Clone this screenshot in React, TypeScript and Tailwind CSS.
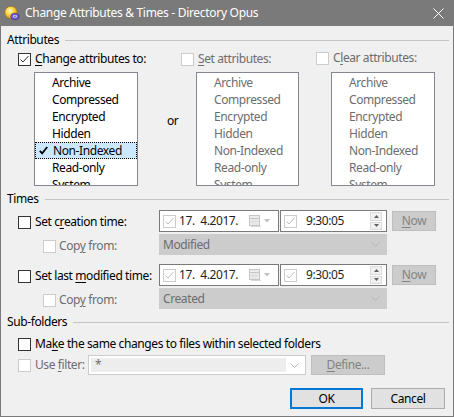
import React from 'react';

const FONT = { fontFamily: '"Noto Sans", "Open Sans", sans-serif' };

const ITEMS = ['Archive', 'Compressed', 'Encrypted', 'Hidden', 'Non-Indexed', 'Read-only', 'System'];

function CheckBox({ checked = false, disabled = false }: { checked?: boolean; disabled?: boolean }) {
  return (
    <div
      className={`w-[13px] h-[13px] shrink-0 bg-white border ${disabled ? 'border-[#cccccc]' : 'border-[#333333]'}`}
    >
      {checked && (
        <svg width="11" height="11" viewBox="0 0 11 11">
          <polyline
            points="1.5,5.5 4,8 9.5,2"
            fill="none"
            stroke={disabled ? '#bdbdbd' : '#333333'}
            strokeWidth="1"
          />
        </svg>
      )}
    </div>
  );
}

// label with one underlined access-key letter
function Label({ pre, key_, post, disabled = false }: { pre: string; key_: string; post: string; disabled?: boolean }) {
  return (
    <span className={`whitespace-nowrap ${disabled ? 'text-[#6d6d6d]' : 'text-black'}`}>
      {pre}
      <span className="underline underline-offset-2">{key_}</span>
      {post}
    </span>
  );
}

function GroupHeader({ title }: { title: string }) {
  return (
    <div className="flex items-center h-[16px] pl-[6px] pr-[4px]">
      <span className="text-black">{title}</span>
      <div className="flex-1 h-px bg-[#c4c4c4] ml-[6px]" />
    </div>
  );
}

function AttrList({ disabled = false, width }: { disabled?: boolean; width: string }) {
  return (
    <div className={`${width} h-[114px] bg-white border border-[#828790] overflow-hidden pt-px`}>
      {ITEMS.map((it, i) => {
        const sel = !disabled && i === 4;
        return (
          <div
            key={it}
            className={`relative h-[17px] flex items-center pl-[17px] ${
              sel ? 'bg-[#cce8ff] border border-dotted border-black pl-[16px]' : ''
            } ${disabled ? 'text-[#6d6d6d]' : 'text-black'}`}
          >
            {sel && (
              <svg className="absolute left-[3px] top-[3px]" width="9" height="9" viewBox="0 0 9 9">
                <polyline points="0.8,4.8 3.2,7.4 8.2,1" fill="none" stroke="#000" strokeWidth="1.8" />
              </svg>
            )}
            {it}
          </div>
        );
      })}
    </div>
  );
}

function Chevron({ color }: { color: string }) {
  return (
    <svg width="9" height="6" viewBox="0 0 9 6">
      <polyline points="0.5,0.5 4.5,4.5 8.5,0.5" fill="none" stroke={color} strokeWidth="1" />
    </svg>
  );
}

function DateBox() {
  return (
    <div className="w-[120px] h-[22px] bg-white border border-[#7a7a7a] flex items-center pl-[3px]">
      <CheckBox checked disabled />
      <span className="ml-[3px] text-[#1e1e1e] whitespace-pre">17.  4.2017.</span>
      <div className="flex-1" />
      {/* calendar glyph */}
      <svg width="13" height="12" viewBox="0 0 13 12" className="mr-[2px]">
        <rect x="0.5" y="0.5" width="10" height="10" fill="#ececec" stroke="#c6c6c6" />
        <line x1="1" y1="3.5" x2="10" y2="3.5" stroke="#c6c6c6" />
        <line x1="4" y1="4" x2="4" y2="10" stroke="#dddddd" />
        <line x1="7" y1="4" x2="7" y2="10" stroke="#dddddd" />
        <line x1="1" y1="6.5" x2="10" y2="6.5" stroke="#dddddd" />
        <rect x="2" y="11" width="10" height="1" fill="#d6d6d6" />
      </svg>
      <svg width="6" height="4" viewBox="0 0 6 4" className="mr-[8px]">
        <polygon points="0,0 6,0 3,3.5" fill="#c0c0c0" />
      </svg>
    </div>
  );
}

function TimeBox() {
  return (
    <div className="w-[107px] h-[22px] bg-white border border-[#7a7a7a] flex items-center pl-[3px] ml-[1px]">
      <CheckBox checked disabled />
      <span className="ml-[9px] text-[#1e1e1e]">9:30:05</span>
      <div className="flex-1" />
      <div className="w-[12px] h-[18px] mr-[4px] flex flex-col gap-px">
        <div className="flex-1 bg-[#f0f0f0] border border-[#dadada] flex items-center justify-center">
          <svg width="5" height="3" viewBox="0 0 5 3">
            <polygon points="0,3 5,3 2.5,0" fill="#606060" />
          </svg>
        </div>
        <div className="flex-1 bg-[#f0f0f0] border border-[#dadada] flex items-center justify-center">
          <svg width="5" height="3" viewBox="0 0 5 3">
            <polygon points="0,0 5,0 2.5,3" fill="#606060" />
          </svg>
        </div>
      </div>
    </div>
  );
}

function DisabledButton({ pre, key_, post, width }: { pre: string; key_: string; post: string; width: string }) {
  return (
    <div
      className={`${width} h-[20px] bg-[#cccccc] border border-[#bfbfbf] flex items-center justify-center text-[#838383]`}
    >
      <span>
        {pre}
        <span className="underline underline-offset-2">{key_}</span>
        {post}
      </span>
    </div>
  );
}

function DisabledCombo({ text }: { text: string }) {
  return (
    <div className="w-[228px] h-[21px] bg-[#cccccc] border border-[#cccccc] flex items-center pl-[3px] pr-[6px] text-[#6d6d6d]">
      <span className="flex-1">{text}</span>
      <Chevron color="#b4b4b4" />
    </div>
  );
}

function TimeRow({ pre, key_, post, combo }: { pre: string; key_: string; post: string; combo: string }) {
  return (
    <div className="flex flex-col">
      <div className="flex items-center h-[22px]">
        <div className="w-[141px] flex items-center gap-[4px] pt-[2px]">
          <CheckBox />
          <Label pre={pre} key_={key_} post={post} />
        </div>
        <DateBox />
        <TimeBox />
        <div className="ml-[5px]">
          <DisabledButton pre="" key_="N" post="ow" width="w-[44px]" />
        </div>
      </div>
      <div className="flex items-center h-[21px] mt-[2px]">
        <div className="w-[141px] flex items-center gap-[3px] pl-[25px] pt-[3px]">
          <CheckBox disabled />
          <Label pre="Cop" key_="y" post=" from:" disabled />
        </div>
        <DisabledCombo text={combo} />
      </div>
    </div>
  );
}

export default function App() {
  return (
    <div className="w-[454px] h-[417px] flex flex-col text-[12px] leading-[16px] tracking-[-0.4px] select-none" style={FONT}>
      {/* Title bar */}
      <div className="h-[26px] bg-[#7a7a7a] flex items-center pl-[4px] pr-[10px] shrink-0">
        <svg width="16" height="16" viewBox="0 0 16 16">
          <defs>
            <radialGradient id="sun" cx="0.4" cy="0.35" r="0.7">
              <stop offset="0" stopColor="#fff7c0" />
              <stop offset="0.5" stopColor="#f7cf3a" />
              <stop offset="1" stopColor="#c8901a" />
            </radialGradient>
          </defs>
          <circle cx="7" cy="7.5" r="6.2" fill="url(#sun)" stroke="#9a6d10" strokeWidth="0.6" />
          <ellipse cx="11" cy="11.5" rx="4.2" ry="3.2" fill="#6a5acd" stroke="#3b2f8a" strokeWidth="0.6" />
          <ellipse cx="11" cy="11.3" rx="2.2" ry="1.4" fill="#d8d4ff" />
          <circle cx="11" cy="11.3" r="0.7" fill="#3b2f8a" />
        </svg>
        <span className="ml-[5px] text-white text-[12px] tracking-[-0.3px]">Change Attributes &amp; Times - Directory Opus</span>
        <div className="flex-1" />
        <svg width="11" height="11" viewBox="0 0 11 11">
          <line x1="0.5" y1="0.5" x2="10.5" y2="10.5" stroke="#fff" strokeWidth="1" />
          <line x1="10.5" y1="0.5" x2="0.5" y2="10.5" stroke="#fff" strokeWidth="1" />
        </svg>
      </div>

      {/* Dialog body */}
      <div className="flex-1 bg-[#f0f0f0] border-x border-b border-[#7a7a7a] flex flex-col">
        <div className="mt-[6px]">
          <GroupHeader title="Attributes" />
        </div>

        <div className="flex pl-[17px] mt-[3px]">
          {/* change */}
          <div className="w-[120px] flex flex-col">
            <div className="flex items-center gap-[4px] h-[16px]">
              <CheckBox checked />
              <Label pre="" key_="C" post="hange attributes to:" />
            </div>
            <div className="ml-[16px] mt-[5px]">
              <AttrList width="w-[104px]" />
            </div>
          </div>
          <div className="w-[43px] pl-[29px] pt-[62px] text-black">or</div>
          {/* set */}
          <div className="w-[135px] flex flex-col">
            <div className="flex items-center gap-[4px] h-[16px]">
              <CheckBox disabled />
              <Label pre="" key_="S" post="et attributes:" disabled />
            </div>
            <div className="ml-[15px] mt-[5px]">
              <AttrList disabled width="w-[103px]" />
            </div>
          </div>
          {/* clear */}
          <div className="flex flex-col">
            <div className="flex items-center gap-[4px] h-[16px] -mt-px mb-px">
              <CheckBox disabled />
              <Label pre="C" key_="l" post="ear attributes:" disabled />
            </div>
            <div className="ml-[15px] mt-[5px]">
              <AttrList disabled width="w-[104px]" />
            </div>
          </div>
        </div>

        <div className="mt-[5px]">
          <GroupHeader title="Times" />
        </div>
        <div className="pl-[17px] mt-[3px] flex flex-col gap-[9px]">
          <TimeRow pre="Set c" key_="r" post="eation time:" combo="Modified" />
          <TimeRow pre="Set last " key_="m" post="odified time:" combo="Created" />
        </div>

        <div className="mt-[5px]">
          <GroupHeader title="Sub-folders" />
        </div>
        <div className="pl-[17px] mt-[6px] flex items-center gap-[4px] h-[16px]">
          <CheckBox />
          <Label pre="Ma" key_="k" post="e the same changes to files within selected folders" />
        </div>
        <div className="pl-[17px] mt-[3px] flex items-center h-[20px]">
          <div className="w-[70px] flex items-center gap-[4px]">
            <CheckBox disabled />
            <Label pre="Use " key_="f" post="ilter:" disabled />
          </div>
          <div className="w-[218px] h-[20px] bg-white border border-[#cccccc] flex items-center p-[2px]">
            <div className="w-[195px] h-full bg-[#ededed] pl-[4px] text-[#6d6d6d] flex items-center">*</div>
            <div className="flex-1 flex items-center justify-center pt-px">
              <Chevron color="#b4b4b4" />
            </div>
          </div>
          <div className="ml-[5px]">
            <DisabledButton pre="" key_="D" post="efine..." width="w-[74px]" />
          </div>
        </div>

        <div className="flex justify-end gap-[8px] pr-[8px] mt-[13px]">
          <div className="w-[73px] h-[21px] bg-[#e1e1e1] border-2 border-[#0078d7] flex items-center justify-center text-black">
            OK
          </div>
          <div className="w-[74px] h-[21px] bg-[#e1e1e1] border border-[#adadad] flex items-center justify-center text-black">
            Cancel
          </div>
        </div>
      </div>
    </div>
  );
}
